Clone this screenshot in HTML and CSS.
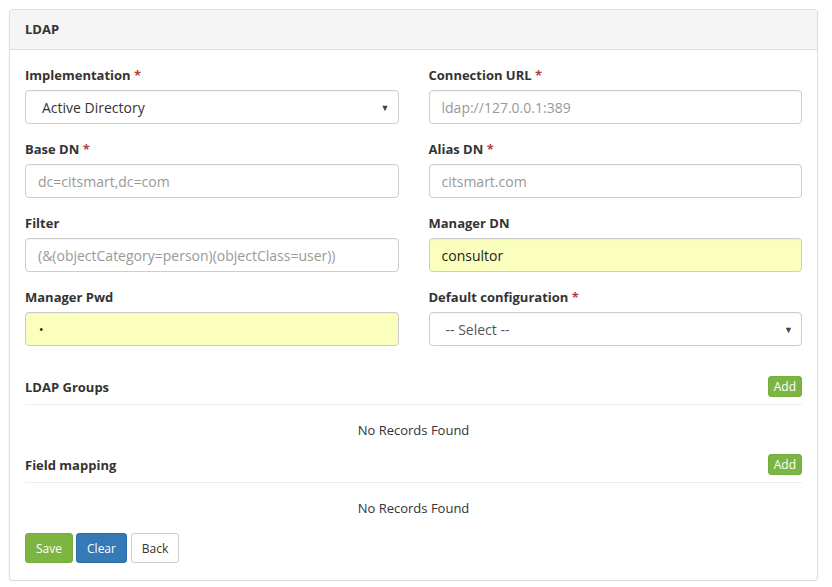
FILE: index.html
```html
<!DOCTYPE html>
<html>
<head>
<meta charset="utf-8">
<link rel="stylesheet" href="styles.css">
</head>
<body>
<div class="panel">
  <div class="panel-heading">LDAP</div>
  <div class="panel-body">
    <div class="grid">
      <div class="form-group">
        <label>Implementation <span class="req">*</span></label>
        <div class="select"><span class="val">Active Directory</span><span class="caret">▼</span></div>
      </div>
      <div class="form-group">
        <label>Connection URL <span class="req">*</span></label>
        <div class="input placeholder">ldap://127.0.0.1:389</div>
      </div>
      <div class="form-group">
        <label>Base DN <span class="req">*</span></label>
        <div class="input placeholder">dc=citsmart,dc=com</div>
      </div>
      <div class="form-group">
        <label>Alias DN <span class="req">*</span></label>
        <div class="input placeholder">citsmart.com</div>
      </div>
      <div class="form-group">
        <label>Filter</label>
        <div class="input placeholder">(&amp;(objectCategory=person)(objectClass=user))</div>
      </div>
      <div class="form-group">
        <label>Manager DN</label>
        <div class="input autofill">consultor</div>
      </div>
      <div class="form-group">
        <label>Manager Pwd</label>
        <div class="input autofill"><span class="dot">•</span></div>
      </div>
      <div class="form-group">
        <label>Default configuration <span class="req">*</span></label>
        <div class="select"><span class="val sel">-- Select --</span><span class="caret">▼</span></div>
      </div>
    </div>

    <div class="section-head first">
      <span class="section-title">LDAP Groups</span>
      <span class="btn-add">Add</span>
    </div>
    <div class="empty">No Records Found</div>

    <div class="section-head">
      <span class="section-title">Field mapping</span>
      <span class="btn-add">Add</span>
    </div>
    <div class="empty last">No Records Found</div>

    <div class="actions">
      <span class="btn btn-save">Save</span>
      <span class="btn btn-clear">Clear</span>
      <span class="btn btn-back">Back</span>
    </div>
  </div>
</div>
</body>
</html>
```

FILE: styles.css
```css
* { box-sizing: border-box; }
body {
  margin: 0;
  padding: 9px 14px 0 9px;
  background: #fff;
  font-family: "Open Sans", "Segoe UI", sans-serif;
  font-size: 14px;
  color: #333;
}
.panel {
  width: 809px;
  border: 1px solid #dcdcdc;
  border-radius: 4px;
  box-shadow: 0 1px 2px rgba(0,0,0,0.06);
  background: #fff;
}
.panel-heading {
  height: 40px;
  background: #f5f5f5;
  border-bottom: 1px solid #ddd;
  border-radius: 3px 3px 0 0;
  padding: 0 15px 1px;
  display: flex;
  align-items: center;
  font-weight: 700;
  font-size: 13px;
  color: #333;
}
.panel-body {
  padding: 15px 15px 17px 15px;
}
.grid {
  display: grid;
  grid-template-columns: 1fr 1fr;
  column-gap: 30px;
}
.form-group {
  margin-bottom: 15px;
}
label {
  display: block;
  font-weight: 700;
  font-size: 13px;
  line-height: 20px;
  margin-bottom: 5px;
  color: #333;
}
.req { color: #a94442; }
.input, .select {
  height: 34px;
  border: 1px solid #ccc;
  border-radius: 4px;
  padding: 1px 12px 0;
  display: flex;
  align-items: center;
  font-size: 14px;
  line-height: 20px;
  box-shadow: inset 0 1px 1px rgba(0,0,0,0.04);
  color: #333;
  white-space: nowrap;
  overflow: hidden;
}
.placeholder { color: #999; }
.autofill { background: #faffbd; color: #222; }
.dot { font-size: 12px; margin-left: 1px; }
.select { padding-left: 16px; padding-right: 8px; justify-content: space-between; }
.select .val.sel { color: #555; }
.caret { font-size: 9px; color: #444; }
.section-head {
  display: flex;
  justify-content: space-between;
  align-items: center;
  border-bottom: 1px solid #eee;
  padding-bottom: 7px;
}
.section-head.first { margin-top: 15px; }
.section-title {
  font-weight: 700;
  font-size: 13px;
}
.btn-add {
  background: #7db543;
  color: #fff;
  font-size: 12px;
  line-height: 20px;
  height: 21px;
  padding: 0 5px;
  border-radius: 3px;
  border: 1px solid #76ad3e;
  display: inline-flex;
  align-items: center;
}
.empty {
  text-align: center;
  font-size: 13px;
  line-height: 20px;
  padding: 15px 0 14px;
  color: #333;
}
.empty.last { padding-bottom: 15px; }
.actions {
  display: flex;
  gap: 3px;
}
.btn {
  height: 30px;
  display: inline-flex;
  align-items: center;
  justify-content: center;
  padding: 0 10px;
  font-size: 12px;
  border-radius: 3px;
  border: 1px solid transparent;
}
.btn-save { background: #7db543; color: #fff; border-color: #76ad3e; width: 48px; }
.btn-clear { background: #337ab7; color: #fff; border-color: #2e6da4; width: 51px; }
.btn-back { background: #fff; color: #333; border-color: #ccc; width: 48px; margin-left: 1px; }
```
